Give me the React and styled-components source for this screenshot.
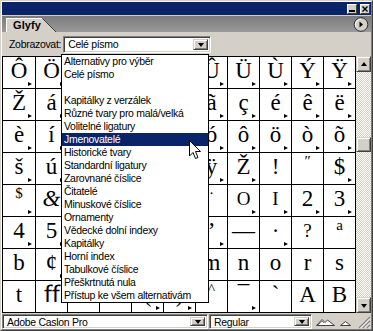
import React from "react";
import styled, { createGlobalStyle } from "styled-components";

const GlobalStyle = createGlobalStyle`
  html, body {
    margin: 0;
    padding: 0;
    background: #d4d0c8;
  }
  body {
    width: 373px;
    height: 331px;
    overflow: hidden;
    font-family: "Liberation Sans", Arial, sans-serif;
  }
`;

const Stage = styled.div`
  position: relative;
  width: 373px;
  height: 331px;
`;

const Window = styled.div`
  width: 373px;
  height: 331px;
  box-sizing: border-box;
  border: 1px solid;
  border-color: #d4d0c8 #404040 #404040 #d4d0c8;
  background: #d4d0c8;
`;

const Frame = styled.div`
  height: 100%;
  box-sizing: border-box;
  border: 1px solid;
  border-color: #ffffff #808080 #808080 #ffffff;
  display: flex;
  flex-direction: column;
`;

const TitleBar = styled.div`
  height: 13px;
  flex: none;
  background: #0a246a;
  display: flex;
  justify-content: flex-end;
  align-items: center;
  gap: 3px;
  padding-right: 1px;
`;

const WinButton = styled.div`
  width: 10px;
  height: 10px;
  box-sizing: border-box;
  background: #d4d0c8;
  border: 1px solid;
  border-color: #ffffff #404040 #404040 #ffffff;
  display: flex;
  align-items: center;
  justify-content: center;
`;

const TabRow = styled.div`
  height: 17px;
  flex: none;
  background: linear-gradient(#7a7a7a, #9a9a9a);
  border-top: 1px solid #d4d0c8;
  box-sizing: border-box;
  display: flex;
  align-items: flex-end;
  justify-content: space-between;
  padding: 0 1px 0 4px;
`;

const Tab = styled.div`
  position: relative;
  width: 52px;
  height: 14px;
  display: flex;
  align-items: center;
`;

const TabShape = styled.svg`
  position: absolute;
  left: 0;
  top: 0;
`;

const TabLabel = styled.span`
  position: relative;
  padding-left: 7px;
  font-size: 11px;
  font-weight: bold;
  color: #000;
  letter-spacing: 0.1px;
`;

const MenuButton = styled.svg`
  align-self: center;
  margin-right: 1px;
`;

const Toolbar = styled.div`
  height: 24px;
  flex: none;
  display: flex;
  align-items: center;
  padding-left: 7px;
  gap: 2px;
`;

const Label = styled.span`
  font-size: 10.5px;
  letter-spacing: -0.3px;
  color: #000;
`;

const Select = styled.div`
  width: ${(p) => p.$width}px;
  height: ${(p) => p.$height}px;
  box-sizing: border-box;
  background: #fff;
  border: 1px solid;
  border-color: #808080 #ffffff #ffffff #808080;
  box-shadow: inset 1px 1px #404040, inset -1px -1px #d4d0c8;
  display: flex;
  align-items: center;
  padding: 2px;
  flex: none;
`;

const SelectText = styled.span`
  flex: 1;
  padding-left: 2px;
  font-size: 10.5px;
  letter-spacing: -0.3px;
  color: #000;
  white-space: nowrap;
  overflow: hidden;
`;

const ArrowButton = styled.div`
  width: 15px;
  height: 100%;
  box-sizing: border-box;
  background: #d4d0c8;
  border: 1px solid;
  border-color: #d4d0c8 #404040 #404040 #d4d0c8;
  box-shadow: inset 1px 1px #ffffff, inset -1px -1px #808080;
  display: flex;
  align-items: center;
  justify-content: center;
`;

const DownTri = styled.span`
  width: 0;
  height: 0;
  border-left: 3.5px solid transparent;
  border-right: 3.5px solid transparent;
  border-top: 4px solid #000;
  margin-top: 1px;
`;

const UpTri = styled.span`
  width: 0;
  height: 0;
  border-left: 3.5px solid transparent;
  border-right: 3.5px solid transparent;
  border-bottom: 4px solid #000;
`;

const Body = styled.div`
  height: 257px;
  flex: none;
  display: flex;
`;

const Grid = styled.div`
  display: grid;
  grid-template-columns: 33px repeat(10, 32px);
  grid-auto-rows: 32px;
  border-left: 1px solid #000;
  border-top: 1px solid #000;
  background: #fff;
`;

const Cell = styled.div`
  position: relative;
  box-sizing: border-box;
  border-right: 1px solid #000;
  border-bottom: 1px solid #000;
  overflow: hidden;
  display: flex;
  justify-content: center;
  align-items: flex-start;
  padding-top: ${(p) => (p.$sup ? 1 : 2)}px;
  font-family: "Liberation Serif", "Times New Roman", serif;
  font-size: ${(p) => (p.$sup ? 15 : p.$small ? 19 : 23)}px;
  line-height: ${(p) => (p.$sup ? 15 : 23)}px;
  font-style: ${(p) => (p.$italic ? "italic" : "normal")};
  color: #000;
`;

const Marker = styled.span`
  position: absolute;
  right: 3px;
  bottom: 2px;
  width: 0;
  height: 0;
  border-left: 4px solid #000;
  border-top: 2px solid transparent;
  border-bottom: 2px solid transparent;
`;

const ScrollBar = styled.div`
  width: 15px;
  display: flex;
  flex-direction: column;
  background-color: #ffffff;
  background-image: conic-gradient(#d4d0c8 25%, #ffffff 0 50%, #d4d0c8 0 75%, #ffffff 0);
  background-size: 2px 2px;
`;

const ScrollButton = styled.div`
  height: 16px;
  flex: none;
  box-sizing: border-box;
  background: #d4d0c8;
  border: 1px solid;
  border-color: #d4d0c8 #404040 #404040 #d4d0c8;
  box-shadow: inset 1px 1px #ffffff, inset -1px -1px #808080;
  display: flex;
  align-items: center;
  justify-content: center;
`;

const Track = styled.div`
  flex: 1;
`;

const Thumb = styled(ScrollButton)`
  height: 15px;
  margin-top: 65px;
`;

const BottomBar = styled.div`
  flex: 1;
  display: flex;
  align-items: flex-start;
  padding-top: 1px;
  gap: 1px;
`;

const ZoomIcons = styled.div`
  display: flex;
  align-items: flex-end;
  gap: 5px;
  padding: 4px 0 0 3px;
`;

const Grip = styled.svg`
  margin-left: auto;
  align-self: flex-end;
`;

const Dropdown = styled.ul`
  position: absolute;
  left: 61px;
  top: 54px;
  width: 148px;
  margin: 0;
  padding: 0;
  list-style: none;
  box-sizing: border-box;
  background: #fff;
  border: 1px solid #000;
`;

const Item = styled.li`
  height: 13px;
  line-height: 13px;
  padding-left: 2px;
  font-size: 10.5px;
  letter-spacing: -0.3px;
  white-space: nowrap;
  color: ${(p) => (p.$active ? "#fff" : "#000")};
  background: ${(p) => (p.$active ? "#0a246a" : "transparent")};
`;

const Cursor = styled.svg`
  position: absolute;
  left: 189px;
  top: 140px;
`;

const options = [
  "Alternativy pro výběr",
  "Celé písmo",
  "",
  "Kapitálky z verzálek",
  "Různé tvary pro malá/velká",
  "Volitelné ligatury",
  "Jmenovatelé",
  "Historické tvary",
  "Standardní ligatury",
  "Zarovnané číslice",
  "Čitatelé",
  "Minuskové číslice",
  "Ornamenty",
  "Vědecké dolní indexy",
  "Kapitálky",
  "Horní index",
  "Tabulkové číslice",
  "Přeškrtnutá nula",
  "Přístup ke všem alternativám",
];

// [glyph, marker, variant]; columns 2-5 sit under the open list
const rows = [
  [["Ô", 1], ["Ö", 1], ["", 1], ["", 1], ["", 1], ["", 1], ["Û", 1], ["Ü", 1], ["Ù", 1], ["Ý", 1], ["Ÿ", 1]],
  [["Ž", 1], ["á", 1], ["", 1], ["", 1], ["", 1], ["", 1], ["ã", 1], ["ç", 1], ["é", 1], ["ê", 1], ["ë", 1]],
  [["è", 1], ["í", 1], ["", 1], ["", 1], ["", 1], ["", 1], ["ó", 1], ["ô", 1], ["ö", 1], ["ò", 1], ["õ", 1]],
  [["š", 1], ["ú", 1], ["", 1], ["", 1], ["", 1], ["", 1], ["ÿ", 1], ["Ž", 1], ["!", 0], ["″", 0, "sup"], ["$", 1]],
  [["$", 1, "sup"], ["&", 0, "italic"], ["", 1], ["", 1], ["", 1], ["", 1], ["·", 0, "sup"], ["O", 1, "small"], ["I", 1, "small"], ["2", 1], ["3", 1]],
  [["4", 1], ["5", 1], ["", 1], ["", 1], ["", 1], ["", 1], ["’", 1], ["—", 0], ["·", 1], ["?", 0, "small"], ["a", 0, "sup"]],
  [["b", 0], ["¢", 1], ["", 0], ["", 0], ["", 0], ["", 0], ["m", 0], ["n", 0], ["o", 0], ["r", 0], ["s", 0]],
  [["t", 0], ["ﬀ", 0], ["", 0], ["", 0], ["(", 1], [")", 1], ["^", 0, "sup"], ["¯", 1], ["`", 0], ["A", 0], ["B", 0]],
];

function App() {
  return (
    <Stage>
      <GlobalStyle />
      <Window>
        <Frame>
          <TitleBar>
            <WinButton>
              <svg width="6" height="6" viewBox="0 0 6 6">
                <rect x="0" y="4" width="6" height="2" fill="#000" />
              </svg>
            </WinButton>
            <WinButton>
              <svg width="6" height="6" viewBox="0 0 6 6">
                <path d="M0.5 0.5 L5.5 5.5 M5.5 0.5 L0.5 5.5" stroke="#000" strokeWidth="1.4" />
              </svg>
            </WinButton>
          </TitleBar>

          <TabRow>
            <Tab>
              <TabShape width="52" height="14" viewBox="0 0 52 14">
                <path d="M0 14 L0 0 L36 0 L50 14 Z" fill="#d4d0c8" />
                <path d="M0.5 14 L0.5 0.5 L36 0.5" stroke="#ffffff" fill="none" />
                <path d="M36.5 0.5 L50 14" stroke="#404040" fill="none" />
              </TabShape>
              <TabLabel>Glyfy</TabLabel>
            </Tab>
            <MenuButton width="16" height="15" viewBox="0 0 16 15">
              <circle cx="8" cy="7.5" r="6.8" fill="#d4d0c8" stroke="#303030" />
              <path d="M3 10 A5.5 5.5 0 0 1 8 2.2" stroke="#ffffff" fill="none" />
              <path d="M6.5 4.5 L10 7.5 L6.5 10.5 Z" fill="#000" />
            </MenuButton>
          </TabRow>

          <Toolbar>
            <Label>Zobrazovat:</Label>
            <Select $width={148} $height={17}>
              <SelectText>Celé písmo</SelectText>
              <ArrowButton>
                <DownTri />
              </ArrowButton>
            </Select>
          </Toolbar>

          <Body>
            <Grid>
              {rows.map((row, r) =>
                row.map(([ch, mark, kind], c) => (
                  <Cell
                    key={`${r}-${c}`}
                    $sup={kind === "sup"}
                    $small={kind === "small"}
                    $italic={kind === "italic"}
                  >
                    {ch}
                    {mark ? <Marker /> : null}
                  </Cell>
                ))
              )}
            </Grid>
            <ScrollBar>
              <ScrollButton>
                <UpTri />
              </ScrollButton>
              <Track>
                <Thumb />
              </Track>
              <ScrollButton>
                <DownTri />
              </ScrollButton>
            </ScrollBar>
          </Body>

          <BottomBar>
            <Select $width={206} $height={15}>
              <SelectText>Adobe Caslon Pro</SelectText>
              <ArrowButton>
                <DownTri />
              </ArrowButton>
            </Select>
            <Select $width={103} $height={15}>
              <SelectText>Regular</SelectText>
              <ArrowButton>
                <DownTri />
              </ArrowButton>
            </Select>
            <ZoomIcons>
              <svg width="19" height="8" viewBox="0 0 19 8">
                <path d="M0.5 7.5 L6 1.5 L9 4.5 L11.5 2 L18.5 7.5 Z" fill="#ffffff" stroke="#404040" />
                <path d="M2 7 L6 3 L8 5" stroke="#808080" fill="none" />
              </svg>
              <svg width="11" height="5" viewBox="0 0 11 5">
                <path d="M0.5 4.5 L5.5 0.5 L10.5 4.5 Z" fill="#ffffff" stroke="#404040" />
              </svg>
            </ZoomIcons>
            <Grip width="13" height="13" viewBox="0 0 13 13">
              <path d="M12 1 L1 12 M12 5 L5 12 M12 9 L9 12" stroke="#808080" strokeWidth="1.2" />
              <path d="M12 2.5 L2.5 12 M12 6.5 L6.5 12 M12 10.5 L10.5 12" stroke="#ffffff" strokeWidth="0.8" />
            </Grip>
          </BottomBar>
        </Frame>
      </Window>

      <Dropdown>
        {options.map((o, i) => (
          <Item key={i} $active={o === "Jmenovatelé"}>
            {o || "\u00a0"}
          </Item>
        ))}
      </Dropdown>

      <Cursor width="13" height="20" viewBox="0 0 13 20">
        <path
          d="M0.5 0.5 L0.5 16 L4 12.5 L6.5 18.5 L9 17.5 L6.5 11.5 L11.5 11.5 Z"
          fill="#ffffff"
          stroke="#000"
          strokeLinejoin="miter"
        />
      </Cursor>
    </Stage>
  );
}

export default App;
